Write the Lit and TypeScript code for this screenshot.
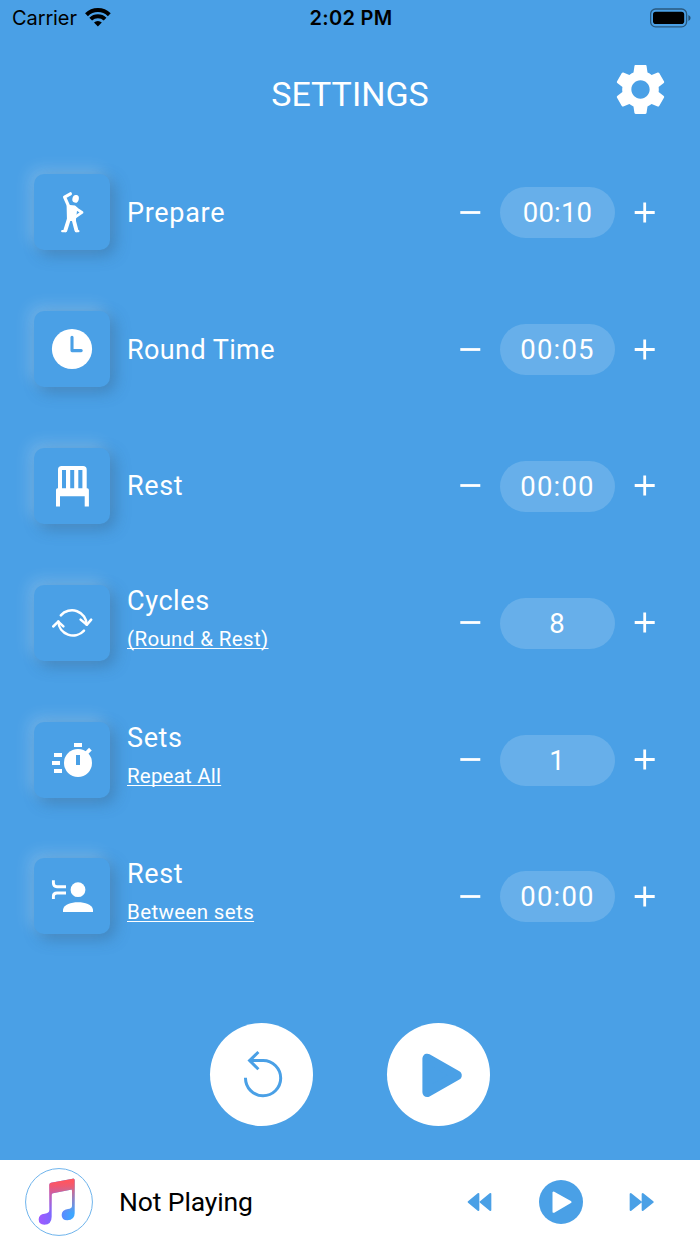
import { LitElement, html, css, svg, TemplateResult } from "lit";
import { customElement, property } from "lit/decorators.js";

interface Setting {
  id: string;
  label: string;
  note?: string;
  value: string;
  icon: TemplateResult;
}

const prepareIcon = svg`
  <g fill="none" stroke="#fff" stroke-linecap="round" stroke-linejoin="round">
    <path stroke-width="3.2" d="M36.4 19.8 30.6 23.2 34.6 32.2"/>
    <path stroke-width="2.8" d="M41.5 34.2 48 38.4 41.5 42.8"/>
    <path stroke-width="3.9" d="M35.2 44 31.4 56.2M39.2 44 42.4 56.2"/>
    <path stroke-width="2.2" d="M28.2 57.2H31.6M42 57.2H44.4"/>
  </g>
  <ellipse cx="41.6" cy="24.8" rx="3.2" ry="3.9" fill="#fff" transform="rotate(15 41.6 24.8)"/>
  <path fill="#fff" d="M32.6 31.5Q34 30.4 36 30.9L41 31.4 43.4 33.5 41.8 47H33Z"/>`;

const clockIcon = svg`
  <circle cx="38" cy="38" r="20.1" fill="#fff"/>
  <path d="M38 26.3V39.6H47.2" fill="none" stroke="#4aa0e6" stroke-width="3.1" stroke-linecap="round" stroke-linejoin="round"/>`;

const chairIcon = svg`
  <path fill="#fff" fill-rule="evenodd" d="M24 40.3V21.7Q24 18 27.7 18H49Q52.7 18 52.7 21.7V40.3H53.2Q54.9 40.3 54.9 42V58.6H50.7V48.3H26V58.6H22V42Q22 40.3 23.6 40.3Z
    M28 22V40.3H32V22ZM36.2 22V40.3H40.2V22ZM44.3 22V40.3H48.4V22Z"/>`;

const cyclesIcon = svg`
  <g fill="none" stroke="#fff" stroke-width="2.5" stroke-linecap="round" stroke-linejoin="round">
    <path d="M26.8 30.4A14.6 14.1 0 0 1 52.6 39.6"/>
    <path d="M50 45.6A14.6 14.1 0 0 1 24.4 36.6"/>
    <path d="M46.6 34.6 52.9 39.8 57.2 34.6M19.2 41.5 24.2 36.6 29.4 41.4"/>
  </g>`;

const setsIcon = svg`
  <circle cx="44" cy="41" r="14" fill="#fff"/>
  <path fill="#fff" d="M40 21H48V25H40ZM20 31H28V35H20ZM18 39H26V43H18ZM20 47H28V51H20Z"/>
  <path d="M51 32.5 56.4 27.1" stroke="#fff" stroke-width="3.8"/>
  <path fill="#4aa0e6" d="M42 33H46V43H42Z"/>`;

const restIcon = svg`
  <circle cx="44" cy="31.7" r="7.4" fill="#fff"/>
  <path fill="#fff" d="M29 54V51.5C30 46.5 37 44.2 44 44.2S58 46.5 59 51.5V54Z"/>
  <path fill="none" stroke="#fff" stroke-width="2.9" d="M19.4 22.3V25Q19.4 28.7 23 28.7H32M32 35H23Q19.4 35 19.4 38.2V41"/>`;

const SETTINGS: Setting[] = [
  { id: "prepare", label: "Prepare", value: "00:10", icon: prepareIcon },
  { id: "round", label: "Round Time", value: "00:05", icon: clockIcon },
  { id: "rest", label: "Rest", value: "00:00", icon: chairIcon },
  { id: "cycles", label: "Cycles", note: "(Round & Rest)", value: "8", icon: cyclesIcon },
  { id: "sets", label: "Sets", note: "Repeat All", value: "1", icon: setsIcon },
  { id: "between", label: "Rest", note: "Between sets", value: "00:00", icon: restIcon },
];

@customElement("status-bar")
class StatusBar extends LitElement {
  static styles = css`
    :host {
      display: grid;
      grid-template-columns: 1fr auto 1fr;
      align-items: center;
      height: 35px;
      padding: 0 9px 0 12px;
      font: 400 20px/35px Inter, sans-serif;
      color: #000;
    }
    .carrier { display: flex; align-items: center; gap: 8px; letter-spacing: -0.1px; }
    .carrier span, .time { padding-top: 1px; }
    .time { font-weight: 600; font-size: 20px; letter-spacing: 0.3px; padding-right: 1px; }
    .battery { justify-self: end; }
    .wifi { margin-bottom: 3px; }
    svg { display: block; }
  `;
  render() {
    return html`
      <div class="carrier">
        <span>Carrier</span>
        <svg class="wifi" width="26" height="20" viewBox="0 0 26 20">
          <g fill="none" stroke="#000">
            <path stroke-width="4.1" d="M1.5 7.7A16.3 16.3 0 0 1 24.3 7.7"/>
            <path stroke-width="3.9" d="M5.7 12.2A10.3 10.3 0 0 1 20.1 12.2"/>
          </g>
          <path d="M12.9 19.4 9 15.6A5.4 5.2 0 0 1 16.8 15.6Z"/>
        </svg>
      </div>
      <div class="time">2:02 PM</div>
      <svg class="battery" width="41" height="20" viewBox="0 0 41 20">
        <rect x=".6" y="1" width="36" height="17.8" rx="5" fill="none" stroke="#000" stroke-opacity=".45" stroke-width="1.3"/>
        <rect x="3" y="3.8" width="31.2" height="12.2" rx="2.8"/>
        <path fill-opacity=".5" d="M38.4 7Q40.6 8 40.6 10T38.4 13Z"/>
      </svg>
    `;
  }
}

@customElement("setting-row")
class SettingRow extends LitElement {
  @property({ attribute: false }) setting!: Setting;

  static styles = css`
    :host {
      display: grid;
      grid-template-columns: 76px 1fr auto;
      column-gap: 17px;
      align-items: center;
      padding: 0 44px 0 34px;
      color: #fff;
      font-family: Roboto, sans-serif;
    }
    .tile {
      width: 76px;
      height: 76px;
      border-radius: 10px;
      background: #4aa0e6;
      box-shadow: 5px 5px 15px rgba(50, 92, 130, 0.42), -5px -5px 15px rgba(255, 255, 255, 0.22);
    }
    svg { display: block; }
    .text { display: flex; flex-direction: column; gap: 6px; padding-top: 1px; }
    .text.double { padding: 0 0 6px; }
    .label { font-size: 27px; line-height: 32px; letter-spacing: 0.6px; }
    .note {
      align-self: flex-start;
      font-size: 20.5px;
      line-height: 32px;
      letter-spacing: 0.37px;
      text-decoration: underline;
      text-decoration-thickness: 1.4px;
      text-underline-offset: 2px;
      text-decoration-skip-ink: none;
    }
    .prepare { letter-spacing: 0.7px; }
    .round { letter-spacing: 0.4px; }
    .sets-note { letter-spacing: 0.2px; }
    .stepper { display: flex; align-items: center; gap: 19px; padding-top: 1px; }
    .pill {
      width: 115px;
      height: 51px;
      border-radius: 26px;
      background: rgba(255, 255, 255, 0.16);
      font-size: 27.5px;
      line-height: 51px;
      letter-spacing: 1.2px;
      text-align: center;
    }
    .prepare-value { letter-spacing: 0.2px; }
  `;

  render() {
    const s = this.setting;
    return html`
      <div class="tile"><svg width="76" height="76" viewBox="0 0 76 76">${s.icon}</svg></div>
      <div class="text ${s.note ? "double" : ""}">
        <div class="label ${s.id}">${s.label}</div>
        ${s.note ? html`<div class="note ${s.id}-note">${s.note}</div>` : ""}
      </div>
      <div class="stepper">
        <svg width="22" height="22" viewBox="0 0 22 22"><path d="M1.3 10.5H21.3" stroke="#fff" stroke-width="2.8"/></svg>
        <div class="pill ${s.id}-value">${s.value}</div>
        <svg width="22" height="22" viewBox="0 0 22 22"><path d="M.7 10.5H20.7M10.7 .5V20.5" stroke="#fff" stroke-width="2.8"/></svg>
      </div>
    `;
  }
}

@customElement("player-bar")
class PlayerBar extends LitElement {
  static styles = css`
    :host {
      display: flex;
      align-items: center;
      height: 84.5px;
      padding: 0 46px 0 25px;
      box-sizing: border-box;
      background: #fff;
      color: #000;
      font: 400 26.5px/32px Roboto, sans-serif;
    }
    svg { display: block; flex: none; }
    .title { flex: 1; padding-left: 26px; letter-spacing: -0.12px; }
    .controls { display: flex; align-items: center; gap: 46.4px; }
  `;
  render() {
    const note =
      "M149 104Q149 99 154 98L219 86Q225 85 225 91V190Q225 210 203 211Q186 211 186 195Q186 180 205 177Q217 176 217 168V122Q217 118 213 119L160 130Q156 131 156 135V200Q156 223 134 224Q117 224 117 208Q117 193 135 191Q149 190 149 180Z";
    return html`
      <svg width="68" height="68" viewBox="76 54 204 204">
        <defs>
          <linearGradient id="cool" gradientUnits="userSpaceOnUse" x1="125" y1="0" x2="215" y2="0">
            <stop offset="0" stop-color="#9b5cff"/><stop offset=".35" stop-color="#7c68ff"/><stop offset="1" stop-color="#3ea6ff"/>
          </linearGradient>
          <linearGradient id="warm" gradientUnits="userSpaceOnUse" x1="0" y1="95" x2="0" y2="190">
            <stop offset="0" stop-color="#ff5560"/><stop offset=".15" stop-color="#fa5668" stop-opacity=".92"/><stop offset="1" stop-color="#e060a0" stop-opacity="0"/>
          </linearGradient>
        </defs>
        <circle cx="178" cy="156" r="100.3" fill="#fff" stroke="#6fb4ec" stroke-width="3"/>
        <path fill="url(#cool)" d=${note}/>
        <path fill="url(#warm)" d=${note}/>
      </svg>
      <div class="title">Not Playing</div>
      <div class="controls">
        <svg width="25" height="20" viewBox="83 126 75 60" fill="#4aa0e6" stroke="#4aa0e6" stroke-width="6" stroke-linejoin="round">
          <path d="M88 156 117 132V180ZM124 156 153 132V180Z"/>
        </svg>
        <svg width="44" height="44" viewBox="297 90 132 132">
          <circle cx="363" cy="156" r="66" fill="#4aa0e6"/>
          <path d="M341 128V185L391 156Z" fill="#fff" stroke="#fff" stroke-width="7" stroke-linejoin="round"/>
        </svg>
        <svg width="25" height="20" viewBox="568 126 75 60" fill="#4aa0e6" stroke="#4aa0e6" stroke-width="6" stroke-linejoin="round">
          <path d="M573 132V180L603 156ZM609 132V180L639 156Z"/>
        </svg>
      </div>
    `;
  }
}

@customElement("app-root")
class AppRoot extends LitElement {
  static styles = css`
    :host {
      display: flex;
      flex-direction: column;
      height: 1244px;
      overflow: hidden;
      background: #4aa0e6;
      color: #fff;
      font-family: Roboto, sans-serif;
    }
    .header {
      display: grid;
      grid-template-columns: 1fr auto 1fr;
      align-items: center;
      height: 109px;
      padding: 0 29px;
      box-sizing: border-box;
    }
    .title {
      grid-column: 2;
      font-size: 34px;
      line-height: 40px;
      padding-top: 8px;
    }
    .gear { justify-self: end; display: block; }
    .rows {
      display: grid;
      grid-template-rows: repeat(6, 136.8px);
      height: 821px;
    }
    .actions {
      flex: 1;
      display: flex;
      justify-content: center;
      gap: 74.5px;
      padding-top: 58px;
    }
    .round { width: 103px; height: 103px; border-radius: 50%; background: #fff; }
    .round svg { display: block; }
  `;
  render() {
    return html`
      <status-bar></status-bar>
      <div class="header">
        <div class="title">SETTINGS</div>
        <svg class="gear" width="61" height="61" viewBox="0 0 24 24" fill="#fff">
          <path d="M19.14 12.94c.04-.3.06-.61.06-.94 0-.32-.02-.64-.07-.94l2.03-1.58c.18-.14.23-.41.12-.61l-1.92-3.32c-.12-.22-.37-.29-.59-.22l-2.39.96c-.5-.38-1.03-.7-1.62-.94L14.4 2.81c-.04-.24-.24-.41-.48-.41h-3.84c-.24 0-.43.17-.47.41L9.25 5.35C8.66 5.59 8.12 5.92 7.63 6.29L5.24 5.33c-.22-.08-.47 0-.59.22L2.74 8.87c-.12.21-.08.47.12.61l2.03 1.58C4.84 11.36 4.8 11.69 4.8 12s.02.64.07.94l-2.03 1.58c-.18.14-.23.41-.12.61l1.92 3.32c.12.22.37.29.59.22l2.39-.96c.5.38 1.03.7 1.62.94l.36 2.54c.05.24.24.41.48.41h3.84c.24 0 .44-.17.47-.41l.36-2.54c.59-.24 1.13-.56 1.62-.94l2.39.96c.22.08.47 0 .59-.22l1.92-3.32c.12-.22.07-.47-.12-.61zM12 15.6c-1.98 0-3.6-1.62-3.6-3.6s1.62-3.6 3.6-3.6 3.6 1.62 3.6 3.6-1.62 3.6-3.6 3.6z"/>
        </svg>
      </div>
      <div class="rows">${SETTINGS.map((s) => html`<setting-row .setting=${s}></setting-row>`)}</div>
      <div class="actions">
        <div class="round">
          <svg width="103" height="103" viewBox="0 0 103 103" fill="none" stroke="#4aa0e6" stroke-width="3">
            <path d="M35.5 54.8A17.6 17.6 0 1 0 53.1 37.6H39.8"/>
            <path d="M48.4 29 39.6 37.6 48.4 46.3"/>
          </svg>
        </div>
        <div class="round">
          <svg width="103" height="103" viewBox="0 0 103 103">
            <path d="M40.2 35.5V69.3L70 52.4Z" fill="#4aa0e6" stroke="#4aa0e6" stroke-width="9.6" stroke-linejoin="round"/>
          </svg>
        </div>
      </div>
      <player-bar></player-bar>
    `;
  }
}
